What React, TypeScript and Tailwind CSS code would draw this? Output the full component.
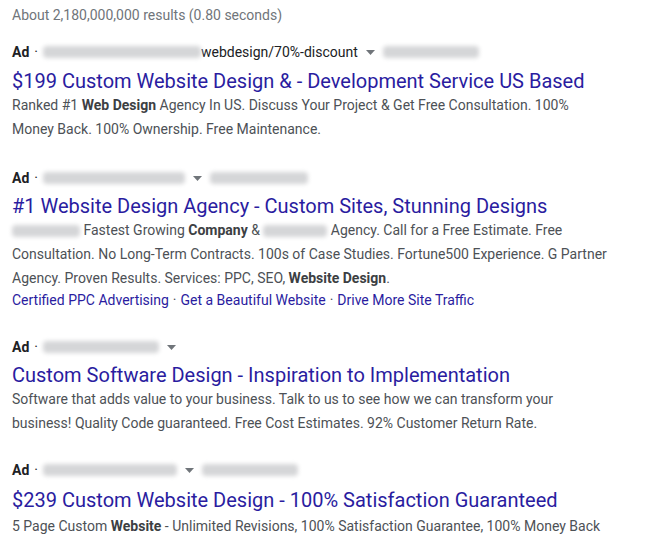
const Caret = () => (
  <svg width="9" height="5" viewBox="0 0 9 5" className="mx-2 inline-block">
    <polygon points="0,0 9,0 4.5,5" fill="#70757a" />
  </svg>
);

const Blur = ({ w }: { w: number }) => (
  <span
    className="inline-block h-[12px] rounded-sm bg-[#d5d6d8] blur-[2px] align-middle"
    style={{ width: w }}
  />
);

const AdLine = ({ children }: { children: React.ReactNode }) => (
  <div className="flex h-5 items-center text-[14px] leading-5 text-[#202124]">
    <span className="font-bold">Ad</span>
    <span className="mx-[5px]">·</span>
    {children}
  </div>
);

const Title = ({ children }: { children: React.ReactNode }) => (
  <div className="whitespace-nowrap text-[20px] leading-6 text-[#2a1ca0]">{children}</div>
);

const Desc = ({ children }: { children: React.ReactNode }) => (
  <div className="whitespace-nowrap text-[14px] leading-6 text-[#4d5156]">{children}</div>
);

export default function App() {
  return (
    <div className="h-[553px] w-[647px] overflow-hidden bg-white px-3 font-['Roboto',sans-serif]">
      <div className="pt-[5px] text-[14px] leading-5 text-[#70757a]">
        About 2,180,000,000 results (0.80 seconds)
      </div>

      <div className="mt-[17px]">
        <AdLine>
          <Blur w={158} />
          <span>webdesign/70%-discount</span>
          <Caret />
          <Blur w={96} />
        </AdLine>
        <div className="mt-[7px]">
          <Title>$199 Custom Website Design &amp; - Development Service US Based</Title>
        </div>
        <Desc>
          Ranked #1 <b className="text-[#3c4043]">Web Design</b> Agency In US. Discuss Your Project &amp; Get Free
          Consultation. 100%
        </Desc>
        <Desc>Money Back. 100% Ownership. Free Maintenance.</Desc>
      </div>

      <div className="mt-[27px]">
        <AdLine>
          <Blur w={142} />
          <Caret />
          <Blur w={98} />
        </AdLine>
        <div className="mt-[6px]">
          <Title>#1 Website Design Agency - Custom Sites, Stunning Designs</Title>
        </div>
        <Desc>
          <Blur w={68} /> Fastest Growing <b className="text-[#3c4043]">Company</b> &amp; <Blur w={64} /> Agency.
          Call for a Free Estimate. Free
        </Desc>
        <Desc>Consultation. No Long-Term Contracts. 100s of Case Studies. Fortune500 Experience. G Partner</Desc>
        <Desc>
          Agency. Proven Results. Services: PPC, SEO, <b className="text-[#3c4043]">Website Design</b>.
        </Desc>
        <div className="flex text-[14px] leading-5 text-[#2a1ca0]">
          <span>Certified PPC Advertising</span>
          <span className="mx-[4px] text-[#4d5156]">·</span>
          <span>Get a Beautiful Website</span>
          <span className="mx-[4px] text-[#4d5156]">·</span>
          <span>Drive More Site Traffic</span>
        </div>
      </div>

      <div className="mt-[27px]">
        <AdLine>
          <Blur w={116} />
          <Caret />
        </AdLine>
        <div className="mt-[6px]">
          <Title>Custom Software Design - Inspiration to Implementation</Title>
        </div>
        <Desc>Software that adds value to your business. Talk to us to see how we can transform your</Desc>
        <Desc>business! Quality Code guaranteed. Free Cost Estimates. 92% Customer Return Rate.</Desc>
      </div>

      <div className="mt-[25px]">
        <AdLine>
          <Blur w={134} />
          <Caret />
          <Blur w={96} />
        </AdLine>
        <div className="mt-[8px]">
          <Title>$239 Custom Website Design - 100% Satisfaction Guaranteed</Title>
        </div>
        <div className="mt-[2px]">
          <Desc>
            5 Page Custom <b className="text-[#3c4043]">Website</b> - Unlimited Revisions, 100% Satisfaction
            Guarantee, 100% Money Back
          </Desc>
        </div>
      </div>
    </div>
  );
}
